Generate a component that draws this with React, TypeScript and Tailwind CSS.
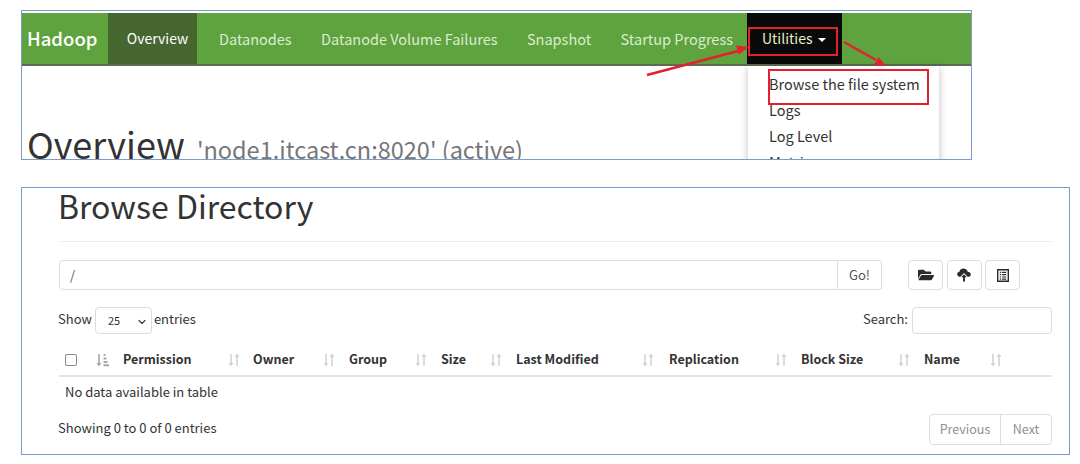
import { FaFolderOpen } from "react-icons/fa";
import { ChevronDown } from "lucide-react";

const columns = [
  { label: "Permission", width: "w-[130px]", pad: "pr-[13px]" },
  { label: "Owner", width: "w-[96px]", pad: "pr-[14px]" },
  { label: "Group", width: "w-[92px]", pad: "pr-[14px]" },
  { label: "Size", width: "w-[75px]", pad: "pr-[14px]" },
  { label: "Last Modified", width: "w-[153px]", pad: "pr-[15px]" },
  { label: "Replication", width: "w-[132px]", pad: "pr-[14px]" },
  { label: "Block Size", width: "w-[123px]", pad: "pr-[14px]" },
  { label: "Name", width: "w-[78px]", pad: "pr-0" },
];

function SortIcon() {
  return (
    <svg width="12" height="14" viewBox="0 0 12 14" className="shrink-0 text-[#d4d4d4]" fill="currentColor">
      <path d="M2.200 1h1.600v9h1.700L3 13.400.5 10h1.700z" />
      <path d="M8.200 13h1.600V4h1.700L9 .6 6.500 4h1.700z" />
    </svg>
  );
}

function SortAscIcon() {
  return (
    <svg width="13" height="14" viewBox="0 0 13 14" className="shrink-0 text-[#a8a8a8]" fill="currentColor">
      <path d="M2.200 1h1.600v9h1.700L3 13.400.5 10h1.700z" />
      <path d="M7.500 1h2v2h-2zM7.500 4.500h3v2h-3zM7.500 8h4v2h-4zM7.500 11.300h5.500v2H7.500z" />
    </svg>
  );
}

function CloudUploadIcon() {
  return (
    <svg width="14" height="14" viewBox="0 0 16 15" className="text-[#2b2b2b]" fill="currentColor">
      <path d="M3.600 9.600C1.600 9.600.2 8.300.2 6.600c0-1.500 1.100-2.700 2.600-2.900C3.300 1.600 5.200.2 7.400.2c2.400 0 4.300 1.500 4.800 3.500 2 .1 3.600 1.400 3.600 3.100 0 1.700-1.400 2.800-3.200 2.800h-.5L8 5.200 3.900 9.600z" />
      <path d="M8 6.500l3.300 3.600H9.100V15H6.900v-4.900H4.700z" />
    </svg>
  );
}

function ListAltIcon() {
  return (
    <svg width="12" height="13" viewBox="0 0 13 14" className="text-[#2b2b2b]">
      <path fill="currentColor" d="M0 0h13v14H0zM1.500 1.500v11h10v-11z" />
      <path fill="currentColor" d="M3 3h1.500v1.300H3zM5.500 3H10v1.300H5.500zM3 5.500h1.500v1.300H3zM5.500 5.500H10v1.300H5.500zM3 8h1.500v1.300H3zM5.500 8H10v1.300H5.500zM3 10.300h1.500v1.300H3zM5.500 10.300H10v1.300H5.500z" />
    </svg>
  );
}

function IconButton({ children }: { children: React.ReactNode }) {
  return (
    <button className="flex h-[30px] w-[35px] items-center justify-center rounded-[4px] border border-[#dedede] bg-white">
      {children}
    </button>
  );
}

export default function App() {
  return (
    <div className="h-[464px] w-[1080px] overflow-hidden bg-white pl-[21px] pt-[10px] font-['Noto_Sans_CJK_SC','Noto_Sans',sans-serif] text-[13px] text-[#333]">
      {/* top screenshot: navbar */}
      <div className="relative h-[150px] w-[951px] overflow-hidden border border-[#7b9ccb]">
        <div className="mt-[2px] flex h-[53px] items-stretch border-b-2 border-[#5c6b55] bg-[#5fa33e] text-[14.500px] text-[#dcecd0]">
          <span className="ml-[5px] w-[81px] self-center text-[18.500px] font-medium text-white">Hadoop</span>
          <span className="flex w-[89px] items-center justify-center bg-[#45662f] pl-[10px] text-[14px] text-white">Overview</span>
          <div className="ml-[22px] flex w-[514px] items-center justify-between">
            <span>Datanodes</span>
            <span>Datanode Volume Failures</span>
            <span>Snapshot</span>
            <span>Startup Progress</span>
          </div>
          <div className="ml-[14px] flex w-[95px] items-center gap-[6px] bg-[#0a0a0a] pl-[15px] text-[14px] text-[#e6efc8]">
            <span>Utilities</span>
            <span className="mt-[2px] border-x-[4px] border-t-[4px] border-x-transparent border-t-white" />
          </div>
        </div>

        <h1 className="ml-[5px] mt-[57px] flex items-baseline gap-[12px] whitespace-nowrap text-[36px] leading-[40px] text-[#333]">
          Overview
          <span className="text-[23.500px] text-[#777]">'node1.itcast.cn:8020' (active)</span>
        </h1>

        {/* dropdown over the page */}
        <div className="absolute left-[726px] top-[55px] h-[110px] w-[191px] bg-white pl-[21px] pt-[5px] text-[14.500px] leading-[26px] text-[#333] shadow-[0_2px_8px_rgba(0,0,0,0.25)]">
          <div>Browse the file system</div>
          <div>Logs</div>
          <div>Log Level</div>
          <div>Metrics</div>
        </div>
      </div>

      {/* bottom screenshot: browse directory */}
      <div className="mt-[27px] h-[268px] w-[1049px] border border-[#7b9ccb] pl-[37px] pr-[17px]">
        <h1 className="-ml-[1px] -mt-[2px] h-[45px] text-[32px] leading-[38px] text-[#333]">Browse Directory</h1>
        <div className="mt-[10px] border-t border-[#eeeeee]" />

        <div className="mt-[18px] flex h-[30px] items-stretch">
          <div className="flex w-[779px] items-center rounded-l-[4px] border border-[#dcdcdc] pl-[10px] text-[#555]">/</div>
          <div className="flex w-[44px] items-center justify-center rounded-r-[4px] border border-l-0 border-[#dcdcdc] text-[#555]">Go!</div>
          <div className="ml-[26px] flex gap-[3.500px]">
            <IconButton>
              <FaFolderOpen size={16} className="text-[#2b2b2b]" />
            </IconButton>
            <IconButton>
              <CloudUploadIcon />
            </IconButton>
            <IconButton>
              <ListAltIcon />
            </IconButton>
          </div>
        </div>

        <div className="mt-[17px] flex h-[27px] items-center">
          <span className="-ml-[1px] mb-[4px]">Show</span>
          <div className="relative ml-[3px] flex h-[27px] w-[57px] items-center rounded-[4px] border border-[#dcdcdc] pl-[12px] text-[11px]">
            25
            <ChevronDown size={12} strokeWidth={2.500} className="absolute right-[3px] top-[8px] text-[#444]" />
          </div>
          <span className="mb-[4px] ml-[2px]">entries</span>
          <span className="mb-[4px] ml-auto">Search:</span>
          <div className="ml-[4px] h-[27px] w-[140px] rounded-[4px] border border-[#dcdcdc]" />
        </div>

        <div className="mt-[10px] flex h-[33px] items-center border-b-2 border-[#e4e4e4] text-[12.500px] font-bold">
          <span className="ml-[6px] h-[12px] w-[12px] rounded-[2px] border border-[#8a8a8a]" />
          <span className="ml-[19px] mr-[14px] flex">
            <SortAscIcon />
          </span>
          {columns.map((col) => (
            <div key={col.label} className={`flex items-center justify-between ${col.width} ${col.pad}`}>
              <span className="mb-[1px] whitespace-nowrap">{col.label}</span>
              <SortIcon />
            </div>
          ))}
        </div>

        <div className="flex h-[29px] items-center pl-[6px]">No data available in table</div>

        <div className="mt-[8px] flex items-center justify-between">
          <span className="-ml-[1px] mb-[3px]">Showing 0 to 0 of 0 entries</span>
          <div className="flex h-[31px] rounded-[4px] border border-[#dedede] text-[12.500px] text-[#8f8f8f]">
            <span className="flex w-[71px] items-center justify-center border-r border-[#dedede]">Previous</span>
            <span className="flex w-[50px] items-center justify-center">Next</span>
          </div>
        </div>
      </div>

      {/* red annotations */}
      <div className="absolute left-[748px] top-[27px] h-[29px] w-[90px] border-2 border-[#e5202e]" />
      <div className="absolute left-[768px] top-[69px] h-[36px] w-[161px] border-2 border-[#e5202e]" />
      <svg className="absolute left-0 top-0" width="1080" height="200" fill="none">
        <path d="M647 75L738 51" stroke="#e5202e" strokeWidth="2.500" />
        <path d="M749 47l-13 -1.500 2.500 9z" fill="#e5202e" />
        <path d="M844 42L876 60" stroke="#e5202e" strokeWidth="2.500" />
        <path d="M886 66l-12-1 4.500-8z" fill="#e5202e" />
      </svg>
    </div>
  );
}
